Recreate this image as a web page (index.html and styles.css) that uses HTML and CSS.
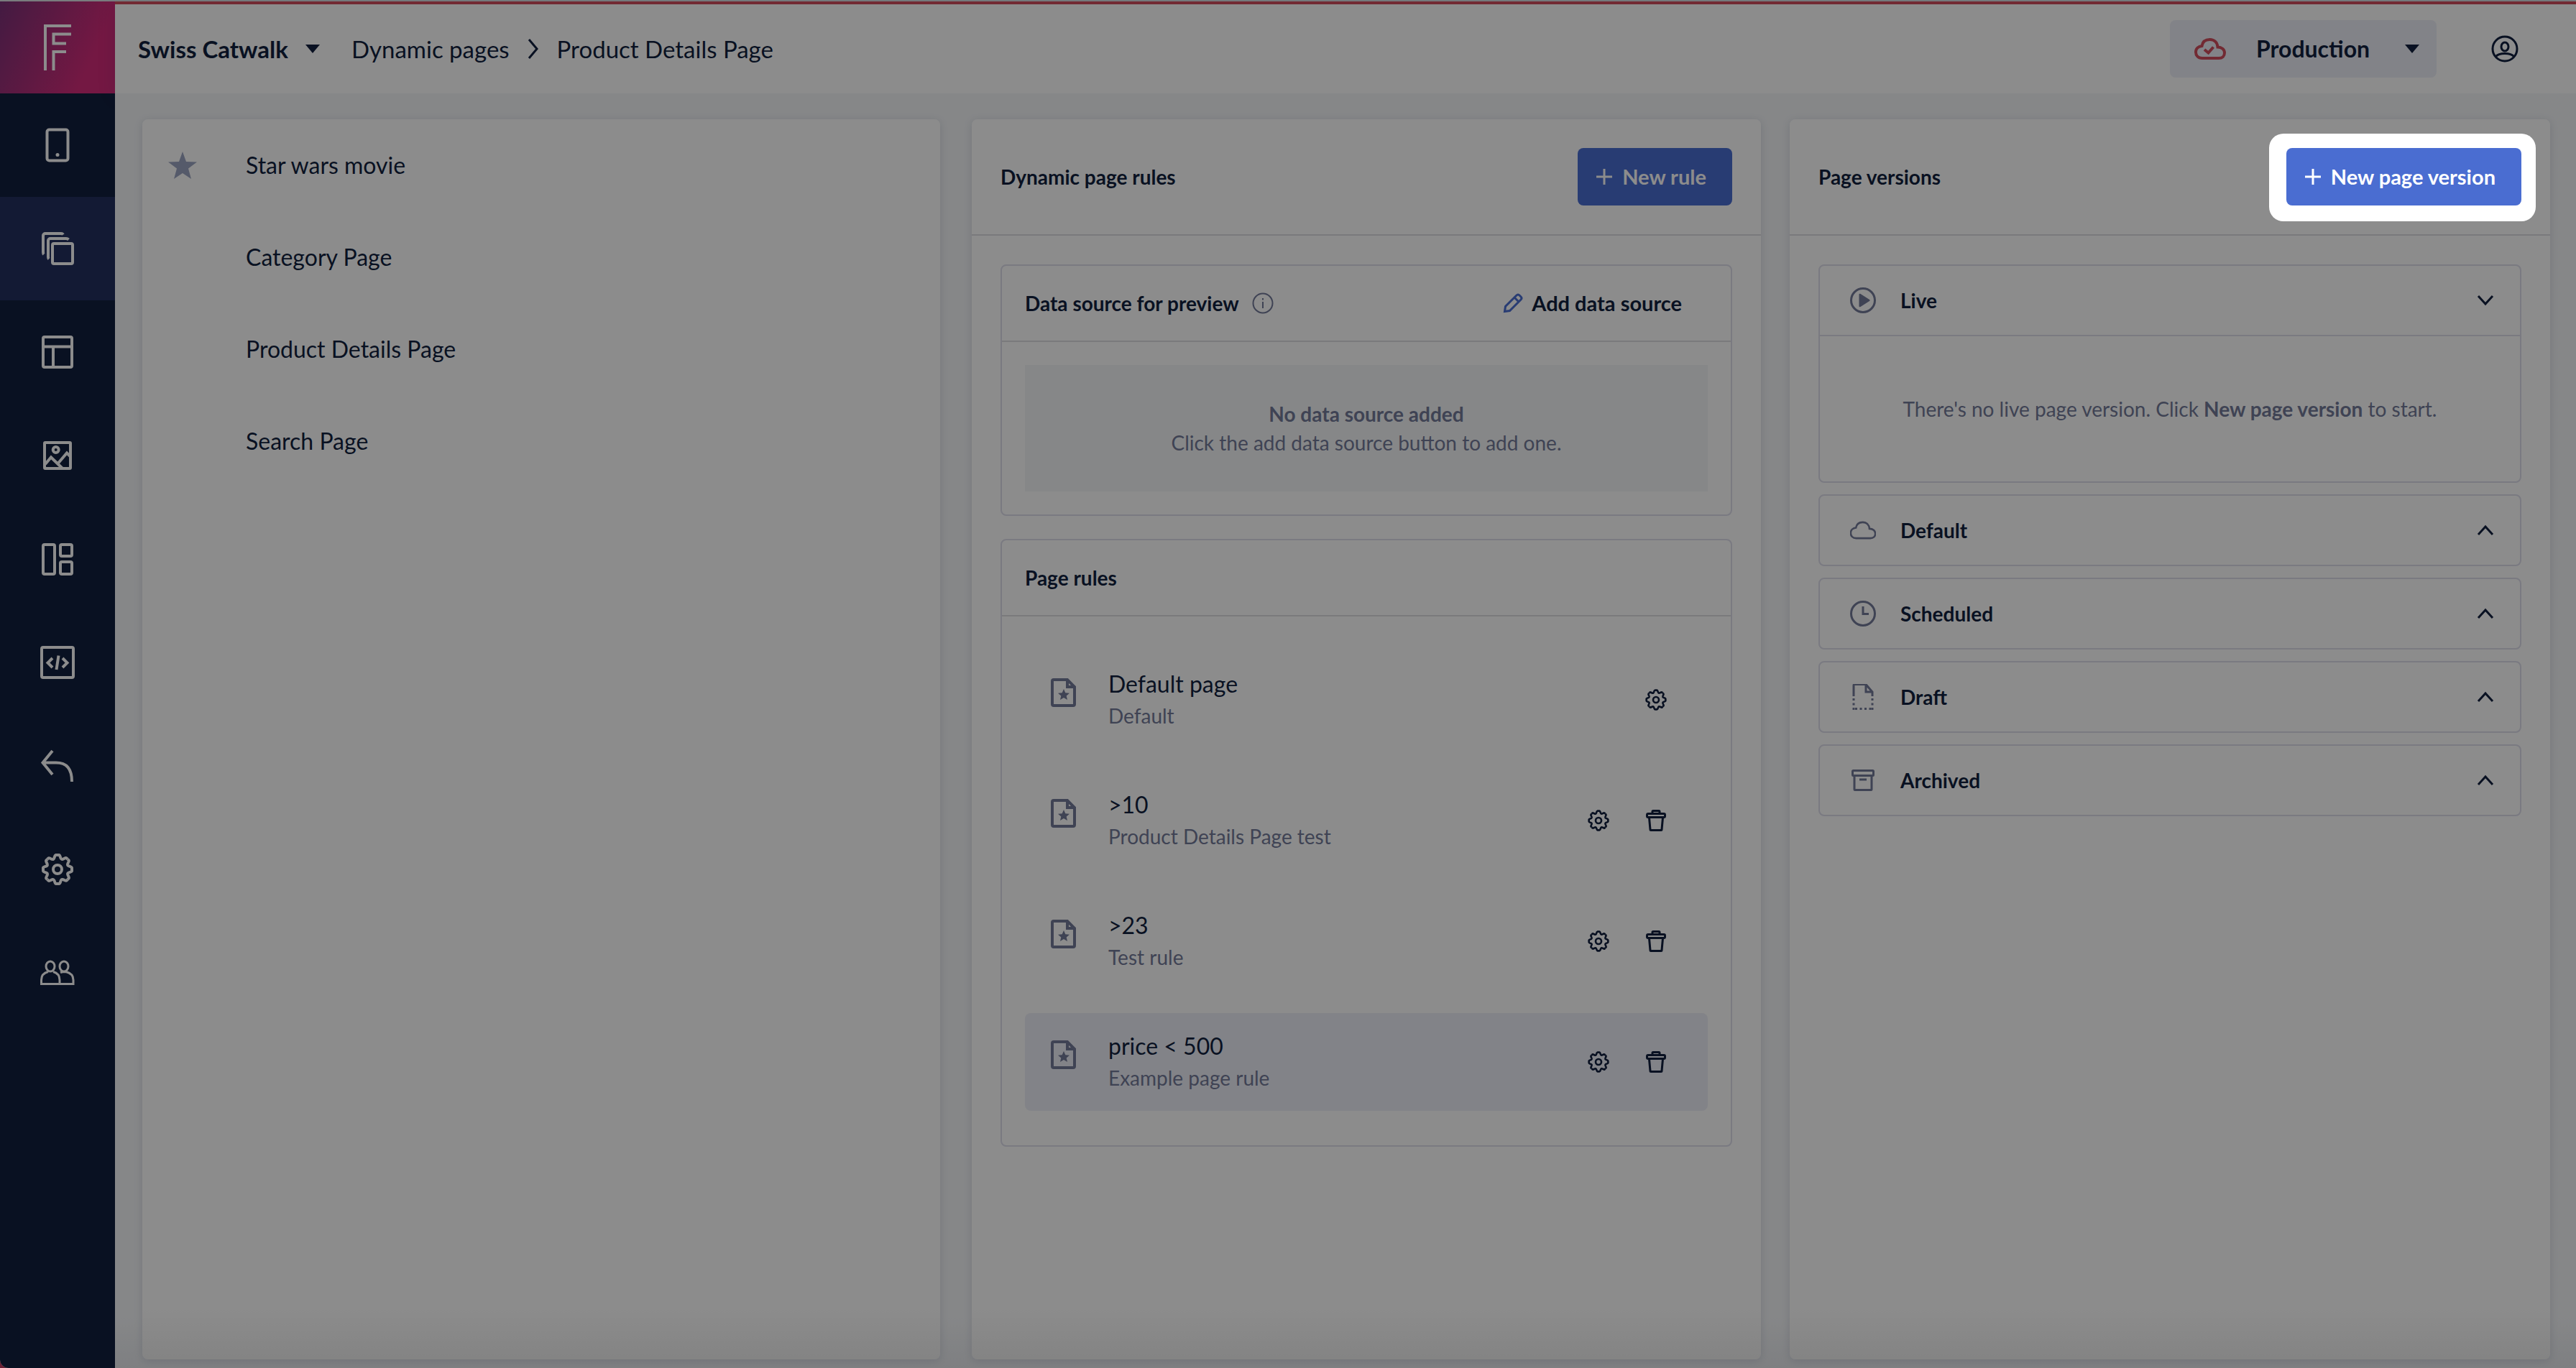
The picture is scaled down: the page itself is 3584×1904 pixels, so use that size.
FILE: index.html
```html
<!DOCTYPE html>
<html lang="en">
<head>
    <meta charset="UTF-8">
    <meta name="viewport" content="width=device-width, initial-scale=1.0">
    <title>Product Details Page</title>
    <link rel="stylesheet" href="styles.css">
</head>
<body>
    <!-- Shared icons -->
    <svg class="sprite" aria-hidden="true">
        <symbol id="gear" viewBox="0 0 48 48">
            <path id="tooth" d="M24 4h2.2c1.8 0 1.4 5.4 3.8 5.9 2.2.4 4.8-2.8 6.5-1.6l1.6 1.6"/>
            <use href="#tooth" transform="rotate(45 24 24)"/>
            <use href="#tooth" transform="rotate(90 24 24)"/>
            <use href="#tooth" transform="rotate(135 24 24)"/>
            <use href="#tooth" transform="rotate(180 24 24)"/>
            <use href="#tooth" transform="rotate(225 24 24)"/>
            <use href="#tooth" transform="rotate(270 24 24)"/>
            <use href="#tooth" transform="rotate(315 24 24)"/>
            <circle cx="24" cy="24" r="6"/>
        </symbol>
        <symbol id="cloud" viewBox="0 0 48 48">
            <path d="M13 37C7 37 4 33 4 28.500C4 23.500 8 20.500 12.500 20C13.500 14 17.500 11 23.500 11C30 11 34 15.500 34.500 21.500C40 21.500 44 25 44 29.500C44 34 41 37 36 37Z"/>
        </symbol>
        <symbol id="doc" viewBox="0 0 36 40">
            <path d="M4 2h19l10 10v24a2 2 0 0 1-2 2H4a2 2 0 0 1-2-2V4a2 2 0 0 1 2-2zM23 2v10h10"/>
            <path class="solid" d="M18 15l2.300 5.200 5.700.500-4.300 3.700 1.300 5.600-5-3-5 3 1.300-5.600-4.300-3.700 5.700-.500z"/>
        </symbol>
        <symbol id="trash" viewBox="0 0 32 32">
            <rect x="3.500" y="6.500" width="25" height="5" rx="1.500"/>
            <path d="M11 6V3.500a1 1 0 0 1 1-1h8a1 1 0 0 1 1 1V6M6.500 12l1.500 16.500a1 1 0 0 0 1 1h14a1 1 0 0 0 1-1L25.500 12"/>
        </symbol>
        <symbol id="plus" viewBox="0 0 22 22">
            <path d="M11 0v22M0 11h22"/>
        </symbol>
        <symbol id="caret" viewBox="0 0 20 12">
            <path class="solid" d="M0 0h20L10 12z"/>
        </symbol>
        <symbol id="up" viewBox="0 0 24 16">
            <path d="M2 14L12 3l10 11"/>
        </symbol>
        <symbol id="down" viewBox="0 0 24 16">
            <path d="M2 2l10 11L22 2"/>
        </symbol>
    </svg>

    <div class="app">
        <nav class="sidebar" aria-label="Main">
            <a class="logo" href="#" aria-label="Home">
                <svg viewBox="0 0 38 64"><path d="M2 64V2h36M38 13.500H13.500v13H31M31 38H13.500v26"/></svg>
            </a>
            <a class="nav-item" href="#" aria-label="Apps">
                <svg viewBox="0 0 48 48"><rect x="9.500" y="2.500" width="29" height="43" rx="3"/><circle class="solid" cx="24" cy="37.500" r="2.500"/></svg>
            </a>
            <a class="nav-item active" href="#" aria-label="Pages">
                <svg viewBox="0 0 48 48"><rect x="17" y="17" width="28" height="28" rx="2"/><path d="M12 38.500q-1-1-1-3V13a3 3 0 0 1 3-3h22q2 0 3.500 1.500M5 32q-1-1-1-3V6a3 3 0 0 1 3-3h22q2 0 3 1.500"/></svg>
            </a>
            <a class="nav-item" href="#" aria-label="Layouts">
                <svg viewBox="0 0 48 48"><rect x="4" y="3" width="40" height="42" rx="2"/><path d="M4 16.500h40M18 16.500V45"/></svg>
            </a>
            <a class="nav-item" href="#" aria-label="Media">
                <svg viewBox="0 0 48 48"><rect x="6" y="6" width="36" height="36" rx="1"/><circle cx="21.700" cy="16" r="4"/><path d="M7 36l8-9.500L31 42M25.500 34L37 20.500l5 5"/></svg>
            </a>
            <a class="nav-item" href="#" aria-label="Components">
                <svg viewBox="0 0 48 48"><rect x="4" y="4" width="16" height="41" rx="2"/><rect x="28" y="4" width="16" height="16" rx="2"/><rect x="28" y="28" width="16" height="17" rx="2"/></svg>
            </a>
            <a class="nav-item" href="#" aria-label="Developer">
                <svg viewBox="0 0 48 48"><rect x="2" y="3" width="44" height="42" rx="2"/><path d="M17 18l-6.500 6.500L17 31M25.500 14.500l-3 19.500M31 18l6.500 6.500L31 31"/></svg>
            </a>
            <a class="nav-item" href="#" aria-label="Redirects">
                <svg viewBox="0 0 48 48"><path d="M17 3L3.500 19.500 17 36M4 19.500h18C36 19.500 44 27 44 46"/></svg>
            </a>
            <a class="nav-item" href="#" aria-label="Settings">
                <svg><use href="#gear"/></svg>
            </a>
            <a class="nav-item thin" href="#" aria-label="Users">
                <svg viewBox="0 0 48 48"><ellipse cx="14" cy="15" rx="6" ry="7"/><path d="M11 22.500C5 24 1.500 28 1.500 34v5.500H27V34c0-6-3.500-10-9-11.500"/><ellipse cx="33" cy="15" rx="6" ry="7"/><path d="M28 23.500c2-.800 5-1 7.500-1C42 24 46 28 46 34v5.500H27"/></svg>
            </a>
        </nav>

        <div class="main">
            <header class="topbar">
                <label class="site">
                    <select aria-label="Site">
                        <option>Swiss Catwalk</option>
                    </select>
                    <svg class="caret"><use href="#caret"/></svg>
                </label>
                <nav class="crumbs" aria-label="Breadcrumb">
                    <a href="#">Dynamic pages</a>
                    <svg viewBox="0 0 18 30"><path d="M3 2l11 13L3 28"/></svg>
                    <a href="#">Product Details Page</a>
                </nav>
                <label class="environment">
                    <svg class="status"><use href="#cloud"/><path d="M16 25l5.500 4.500 7-8"/></svg>
                    <select aria-label="Environment">
                        <option>Production</option>
                    </select>
                    <svg class="caret"><use href="#caret"/></svg>
                </label>
                <button class="account" aria-label="Account">
                    <svg viewBox="0 0 38 38"><circle cx="19" cy="19" r="17"/><ellipse cx="19" cy="16" rx="5" ry="6"/><path d="M6 30c5-6 21-6 26 0"/></svg>
                </button>
            </header>

            <main class="workspace">
                <section class="card">
                    <ul class="page-list">
                        <li><svg class="star" viewBox="0 0 40 38"><path d="M20 0l5 14 15 .500-12 9L32 38l-12-8-12 8 4-14.500-12-9L15 14z"/></svg><a href="#">Star wars movie</a></li>
                        <li><a href="#">Category Page</a></li>
                        <li><a href="#">Product Details Page</a></li>
                        <li><a href="#">Search Page</a></li>
                    </ul>
                </section>

                <div class="detail">
                    <section class="card">
                        <div class="card-head">
                            <h2>Dynamic page rules</h2>
                            <button class="primary"><svg><use href="#plus"/></svg>New rule</button>
                        </div>
                        <div class="card-body rules-body">
                            <div class="box">
                                <div class="box-head">
                                    <h3>Data source for preview</h3>
                                    <svg class="info" viewBox="0 0 30 30"><circle cx="15" cy="15" r="13.500"/><path d="M15 13v9M15 8v2.500"/></svg>
                                    <button class="add-source"><svg viewBox="0 0 28 28"><path d="M2.500 25.500l1-7L19 3q2-2 4 0l2 2q2 2 0 4L9.500 24.500zM16 6l6 6"/></svg>Add data source</button>
                                </div>
                                <div class="box-body">
                                    <p class="empty"><strong>No data source added</strong><br>Click the add data source button to add one.</p>
                                </div>
                            </div>

                            <div class="box">
                                <div class="box-head">
                                    <h3>Page rules</h3>
                                </div>
                                <ul class="rules">
                                    <li class="rule">
                                        <svg class="doc"><use href="#doc"/></svg>
                                        <div class="rule-text"><h4>Default page</h4><p>Default</p></div>
                                        <button aria-label="Rule settings"><svg><use href="#gear"/></svg></button>
                                    </li>
                                    <li class="rule">
                                        <svg class="doc"><use href="#doc"/></svg>
                                        <div class="rule-text"><h4>&gt;10</h4><p>Product Details Page test</p></div>
                                        <button aria-label="Rule settings"><svg><use href="#gear"/></svg></button>
                                        <button class="delete" aria-label="Delete rule"><svg><use href="#trash"/></svg></button>
                                    </li>
                                    <li class="rule">
                                        <svg class="doc"><use href="#doc"/></svg>
                                        <div class="rule-text"><h4>&gt;23</h4><p>Test rule</p></div>
                                        <button aria-label="Rule settings"><svg><use href="#gear"/></svg></button>
                                        <button class="delete" aria-label="Delete rule"><svg><use href="#trash"/></svg></button>
                                    </li>
                                    <li class="rule selected">
                                        <svg class="doc"><use href="#doc"/></svg>
                                        <div class="rule-text"><h4>price &lt; 500</h4><p>Example page rule</p></div>
                                        <button aria-label="Rule settings"><svg><use href="#gear"/></svg></button>
                                        <button class="delete" aria-label="Delete rule"><svg><use href="#trash"/></svg></button>
                                    </li>
                                </ul>
                            </div>
                        </div>
                    </section>

                    <section class="card">
                        <div class="card-head">
                            <h2>Page versions</h2>
                            <div class="spotlight">
                                <button class="primary"><svg><use href="#plus"/></svg>New page version</button>
                            </div>
                        </div>
                        <div class="card-body versions">
                            <div class="box">
                                <button class="toggle" aria-expanded="true">
                                    <svg viewBox="0 0 36 36"><circle cx="18" cy="18" r="16.500"/><path class="solid" d="M12.500 10q0-2 2-1L27 17q1.500 1 0 2l-12.500 8q-2 1-2-1z"/></svg>
                                    Live
                                    <svg class="chevron"><use href="#down"/></svg>
                                </button>
                                <p class="no-version">There's no live page version. Click <strong>New page version</strong> to start.</p>
                            </div>
                            <div class="box">
                                <button class="toggle" aria-expanded="false">
                                    <svg viewBox="3 3 42 42"><use href="#cloud" width="48" height="48"/></svg>
                                    Default
                                    <svg class="chevron"><use href="#up"/></svg>
                                </button>
                            </div>
                            <div class="box">
                                <button class="toggle" aria-expanded="false">
                                    <svg viewBox="0 0 36 36"><circle cx="18" cy="18" r="16.500"/><path d="M18 8v10.500h8"/></svg>
                                    Scheduled
                                    <svg class="chevron"><use href="#up"/></svg>
                                </button>
                            </div>
                            <div class="box">
                                <button class="toggle" aria-expanded="false">
                                    <svg viewBox="0 0 36 36"><path d="M5 17V2q0-1.500 1.500-1.500H22L31 11v6M22 1v10h9"/><path stroke-dasharray="3 3.500" d="M5 20v16M31 20v16"/><path stroke-dasharray="3 3.500" d="M7 34.500h24"/></svg>
                                    Draft
                                    <svg class="chevron"><use href="#up"/></svg>
                                </button>
                            </div>
                            <div class="box">
                                <button class="toggle" aria-expanded="false">
                                    <svg viewBox="0 0 36 36"><rect x="3.500" y="4.500" width="29" height="7" rx="1"/><path d="M6 12v18.500a1 1 0 0 0 1 1h22a1 1 0 0 0 1-1V12M13 17h10"/></svg>
                                    Archived
                                    <svg class="chevron"><use href="#up"/></svg>
                                </button>
                            </div>
                        </div>
                    </section>
                </div>
            </main>
        </div>
    </div>
</body>
</html>
```

FILE: styles.css
```css
* {
    box-sizing: border-box;
}

body {
    font-family: Lato, "Liberation Sans", sans-serif;
    font-size: 28px;
    line-height: 40px;
    color: #121f3e;
    background: linear-gradient(90deg, #c23b60, #5a5a5a);
    margin: 0;
}

h2, h3, h4, p, ul {
    margin: 0;
    padding: 0;
    font-size: 28px;
}

ul {
    list-style: none;
}

a {
    color: inherit;
    text-decoration: none;
}

button, select {
    font: inherit;
    color: inherit;
    background: none;
    border: none;
    padding: 0;
    cursor: pointer;
}

select {
    appearance: none;
    font-size: 32px;
    font-weight: bold;
}

svg {
    display: block;
    flex: none;
    fill: none;
    stroke: currentColor;
    stroke-width: 3;
}

.solid {
    fill: currentColor;
    stroke: none;
}

.sprite {
    position: absolute;
    width: 0;
    height: 0;
}

.app {
    display: flex;
    min-height: 100vh;
    border-top: 2px solid #dde2e6;
    border-radius: 0 0 12px 12px;
    background: #f4f6f8;
}

/* Sidebar */
.sidebar {
    flex: none;
    width: 160px;
    color: #fff;
    background: #121f3e;
    border-bottom-left-radius: 12px;
}

.logo, .nav-item {
    display: flex;
    justify-content: center;
    align-items: center;
}

.logo {
    height: 128px;
    background: linear-gradient(115deg, #7b3278, #d32c7a 75%);
}

.logo svg {
    width: 38px;
    height: 64px;
    stroke-width: 4;
}

.nav-item {
    height: 144px;
}

.nav-item svg {
    width: 48px;
    height: 48px;
    stroke-width: 4;
}

.thin svg {
    stroke-width: 3;
}

.active {
    background: #23315f;
}

/* Top bar */
.main {
    flex: 1;
    display: flex;
    flex-direction: column;
}

.topbar {
    display: flex;
    align-items: center;
    height: 128px;
    padding: 0 80px 0 32px;
    font-size: 33px;
    background: #fff;
    border-top: 4px solid #cf4e5d;
    box-shadow: 0 4px 24px rgba(35, 49, 95, 0.12);
}

.caret {
    width: 20px;
    height: 12px;
}

.site, .crumbs {
    display: flex;
    align-items: center;
    gap: 24px;
}

.site {
    margin-right: 44px;
}

.site select {
    font-size: 33px;
}

.crumbs svg {
    width: 18px;
    height: 30px;
}

.environment {
    display: flex;
    align-items: center;
    height: 80px;
    margin-left: auto;
    padding: 0 24px 0 32px;
    border-radius: 8px;
    background: #edeff7;
}

.environment .caret {
    margin-left: 48px;
}

.status {
    width: 48px;
    height: 48px;
    margin-right: 40px;
    color: #cf4e5d;
    stroke-width: 4;
}

.account {
    margin-left: 76px;
}

.account svg {
    width: 38px;
    height: 38px;
}

/* Cards */
.workspace {
    flex: 1;
    display: grid;
    grid-template-columns: 1110fr 2196fr;
    gap: 44px;
    padding: 36px 36px 12px 38px;
    background: linear-gradient(#f4f6f8 96%, #e6e8ec);
}

.detail {
    display: grid;
    grid-template-columns: 1098fr 1058fr;
    gap: 40px;
}

.card {
    background: linear-gradient(#fff 96%, #f0f0f0);
    border-radius: 8px;
    box-shadow: 0 2px 12px rgba(35, 49, 95, 0.15);
}

.card-head {
    display: flex;
    justify-content: space-between;
    align-items: center;
    height: 162px;
    padding: 0 40px;
    border-bottom: 2px solid #dedee2;
}

.card-body {
    display: flex;
    flex-direction: column;
    padding: 40px;
}

.rules-body {
    gap: 32px;
}

.versions {
    gap: 16px;
}

.primary {
    display: flex;
    align-items: center;
    gap: 14px;
    height: 80px;
    padding: 0 36px 0 26px;
    font-size: 29px;
    font-weight: bold;
    color: #fff;
    background: #4a6dd1;
    border-radius: 8px;
}

.primary svg {
    width: 22px;
    height: 22px;
}

/* Tour highlight, its shadow dims the rest of the page */
.spotlight {
    position: relative;
    z-index: 10;
    margin: -20px -20px -22px -24px;
    padding: 20px 20px 22px 24px;
    background: #fff;
    border-radius: 20px;
    box-shadow: 0 0 0 9999px rgba(0, 0, 0, 0.45);
}

.page-list li {
    display: flex;
    align-items: center;
    height: 128px;
    padding-left: 36px;
    font-size: 32px;
}

.page-list a {
    margin-left: 108px;
}

.star {
    width: 40px;
    height: 38px;
    fill: #9ca5c2;
    stroke: none;
}

.page-list .star + a {
    margin-left: 68px;
}

/* Boxes inside cards */
.box {
    border: 2px solid #dedeec;
    border-radius: 8px;
}

.box-head {
    display: flex;
    align-items: center;
    height: 106px;
    padding: 0 32px;
    border-bottom: 2px solid #dedee2;
}

.info {
    width: 30px;
    height: 30px;
    margin-left: 18px;
    color: #737a99;
    stroke-width: 2;
}

.add-source {
    display: flex;
    align-items: center;
    gap: 12px;
    margin-left: auto;
    padding-right: 36px;
    font-size: 29px;
    font-weight: bold;
}

.add-source svg {
    width: 28px;
    height: 28px;
    color: #4a6dd1;
}

.box-body {
    padding: 32px;
}

.empty {
    padding: 48px 0;
    text-align: center;
    color: #737a99;
    background: #f4f6f8;
}

.rules {
    display: flex;
    flex-direction: column;
    gap: 32px;
    padding: 48px 32px;
}

.rule {
    display: flex;
    align-items: center;
    padding: 24px 32px 24px 36px;
    border-radius: 8px;
}

.selected {
    background: #edeff7;
}

.doc {
    align-self: flex-start;
    width: 36px;
    height: 40px;
    margin-top: 14px;
    color: #737a99;
    stroke-width: 4;
}

.rule-text {
    flex: 1;
    margin-left: 44px;
    line-height: 44px;
}

.rule h4 {
    font-size: 32px;
    font-weight: normal;
}

.rule p {
    color: #737a99;
}

.rule button {
    display: flex;
    justify-content: center;
    width: 80px;
}

.rule button svg {
    width: 32px;
    height: 32px;
    stroke-width: 4;
}

.rule .delete svg {
    stroke-width: 3;
}

.toggle {
    display: flex;
    align-items: center;
    gap: 34px;
    width: 100%;
    height: 96px;
    padding: 0 36px 0 42px;
    font-weight: bold;
}

.toggle svg {
    width: 36px;
    height: 36px;
    color: #737a99;
}

.toggle .chevron {
    width: 24px;
    height: 16px;
    margin-left: auto;
    color: #121f3e;
}

.no-version {
    padding: 81px 20px;
    text-align: center;
    color: #737a99;
    border-top: 2px solid #dedeec;
}
```
